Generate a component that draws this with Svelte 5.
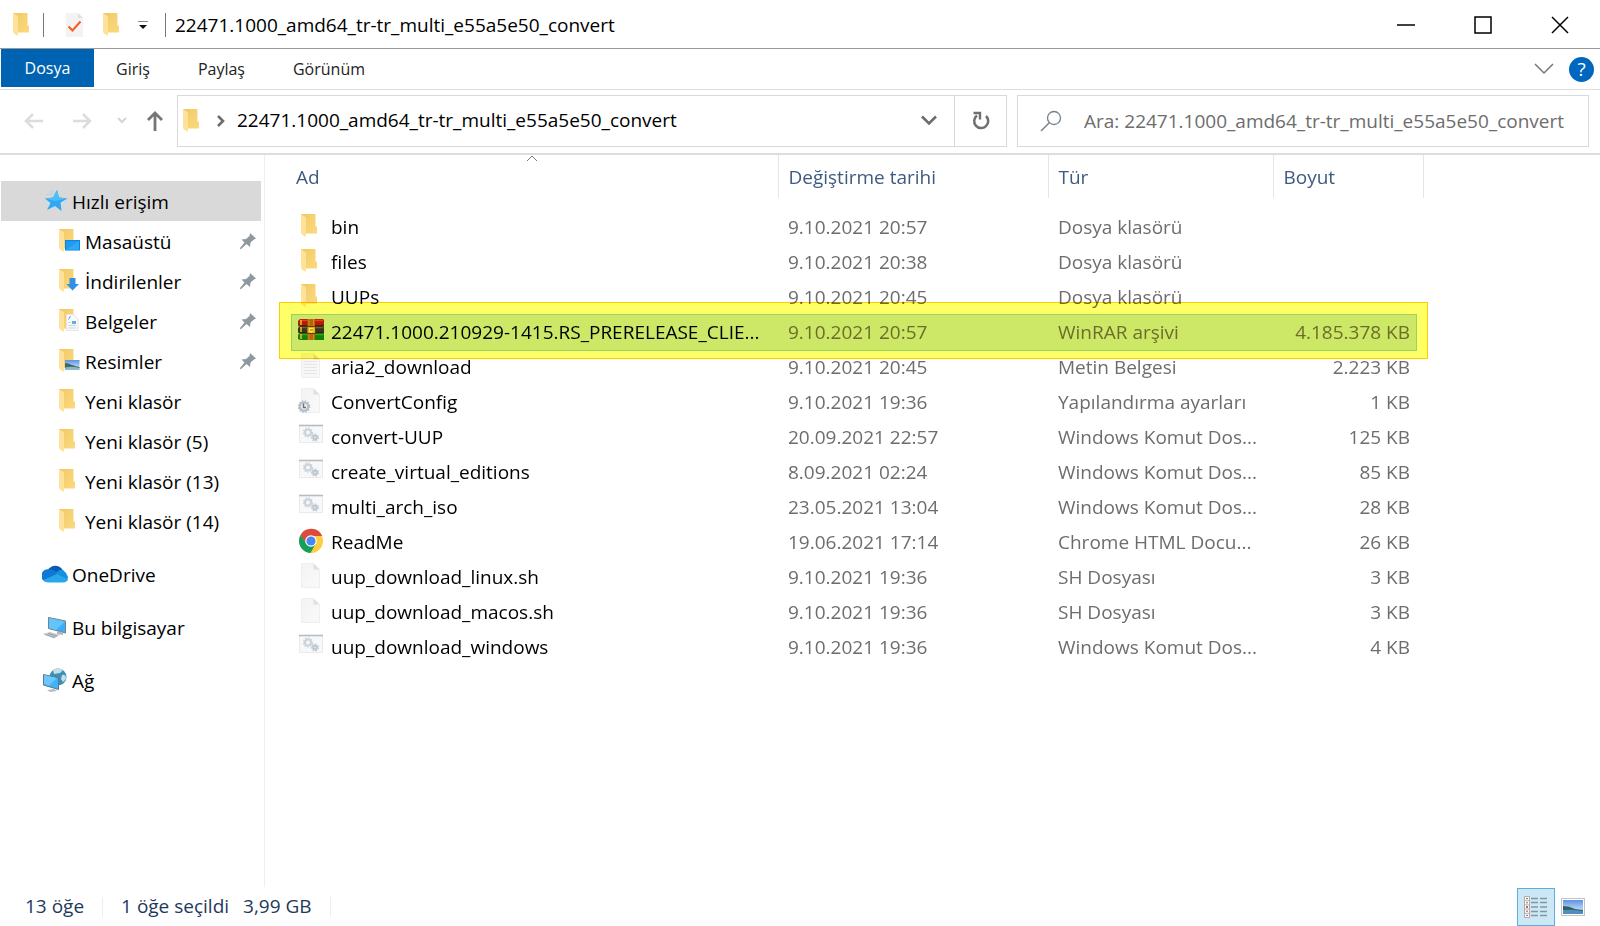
<script>
  const folderName = '22471.1000_amd64_tr-tr_multi_e55a5e50_convert';
  const tabs = ['Giriş', 'Paylaş', 'Görünüm'];

  const quick = [
    { icon: 'desktop', label: 'Masaüstü', pinned: true },
    { icon: 'downloads', label: 'İndirilenler', pinned: true },
    { icon: 'documents', label: 'Belgeler', pinned: true },
    { icon: 'pictures', label: 'Resimler', pinned: true },
    { icon: 'folder', label: 'Yeni klasör' },
    { icon: 'folder', label: 'Yeni klasör (5)' },
    { icon: 'folder', label: 'Yeni klasör (13)' },
    { icon: 'folder', label: 'Yeni klasör (14)' }
  ];
  const places = [
    { icon: 'onedrive', label: 'OneDrive' },
    { icon: 'computer', label: 'Bu bilgisayar' },
    { icon: 'network', label: 'Ağ' }
  ];

  const files = [
    { icon: 'folder', name: 'bin', date: '9.10.2021 20:57', type: 'Dosya klasörü', size: '' },
    { icon: 'folder', name: 'files', date: '9.10.2021 20:38', type: 'Dosya klasörü', size: '' },
    { icon: 'folder', name: 'UUPs', date: '9.10.2021 20:45', type: 'Dosya klasörü', size: '' },
    { icon: 'winrar', name: '22471.1000.210929-1415.RS_PRERELEASE_CLIE...', date: '9.10.2021 20:57', type: 'WinRAR arşivi', size: '4.185.378 KB', selected: true },
    { icon: 'text', name: 'aria2_download', date: '9.10.2021 20:45', type: 'Metin Belgesi', size: '2.223 KB' },
    { icon: 'config', name: 'ConvertConfig', date: '9.10.2021 19:36', type: 'Yapılandırma ayarları', size: '1 KB' },
    { icon: 'script', name: 'convert-UUP', date: '20.09.2021 22:57', type: 'Windows Komut Dos...', size: '125 KB' },
    { icon: 'script', name: 'create_virtual_editions', date: '8.09.2021 02:24', type: 'Windows Komut Dos...', size: '85 KB' },
    { icon: 'script', name: 'multi_arch_iso', date: '23.05.2021 13:04', type: 'Windows Komut Dos...', size: '28 KB' },
    { icon: 'chrome', name: 'ReadMe', date: '19.06.2021 17:14', type: 'Chrome HTML Docu...', size: '26 KB' },
    { icon: 'page', name: 'uup_download_linux.sh', date: '9.10.2021 19:36', type: 'SH Dosyası', size: '3 KB' },
    { icon: 'page', name: 'uup_download_macos.sh', date: '9.10.2021 19:36', type: 'SH Dosyası', size: '3 KB' },
    { icon: 'script', name: 'uup_download_windows', date: '9.10.2021 19:36', type: 'Windows Komut Dos...', size: '4 KB' }
  ];
</script>

{#snippet folderShape()}
  <path d="M3 1H17.500V13.500H19V20.500H7V4L3 2Z" fill="url(#folder-back)" />
  <path d="M3 1L8 4.500V24L4 21.500Q3 20.500 3 19.500Z" fill="#ffe299" />
{/snippet}

{#snippet pageShape()}
  <path d="M3.500 .5H15.500L21.500 6.500V24.500H3.500Z" fill="url(#page-fill)" stroke="#efeff0" />
  <path d="M15.500 .5V6.500H21.500Z" fill="#dfe0e2" />
{/snippet}

{#snippet gear(x, y, r, color)}
  <circle cx={x} cy={y} r={r} fill="none" stroke={color} stroke-width="2.200" />
  <circle cx={x} cy={y} r={r + 1.5} fill="none" stroke={color} stroke-width="1.400" stroke-dasharray="1.500 1.500" />
{/snippet}

{#snippet icon(name)}
  <svg class="icon" viewBox="0 0 26 26" aria-hidden="true">
    {#if name === 'folder'}
      {@render folderShape()}
    {:else if name === 'desktop'}
      {@render folderShape()}
      <rect x="9.500" y="12.500" width="14" height="9.500" fill="#1e9bf0" stroke="#0b84dc" />
      <path d="M10 21.500L23 13V21.500Z" fill="#2fa9f6" />
    {:else if name === 'downloads'}
      {@render folderShape()}
      <path d="M13.500 10H19.500V16H23L16.500 22.500L10.500 16H13.500Z" fill="#2f90e4" />
    {:else if name === 'documents'}
      {@render folderShape()}
      <path d="M10.500 6.500H17L22 10.500V22.500H10.500Z" fill="#f8fafc" stroke="#e3e6e9" />
      <path d="M14.500 8L12.500 11.500" stroke="#6f9cc4" />
      <rect x="16" y="13" width="4" height="3" fill="#6fa9d8" />
      <path d="M12 14.500H14.500M12 17.500H20M12 20H20" stroke="#cdd5dc" />
    {:else if name === 'pictures'}
      {@render folderShape()}
      <rect x="9" y="12" width="14.500" height="10" fill="url(#sky)" />
      <path d="M9 15C13 15 17 18 23.500 19V20H9Z" fill="#41685c" />
      <path d="M9 19.500Q16 18 23.500 20V22H9Z" fill="#8db7cc" />
    {:else if name === 'star'}
      <path d="M15 2L17 9.500L25.500 10.500L18.500 14.500L19.500 23L13 18L5 22L8.500 15L3 10.500L11 9.500Z" fill="#2fa8f5" />
      <path d="M15 2L17 9.500L25.500 10.500L13 13L3 10.500L11 9.500Z" fill="#4fbcfb" />
      <path d="M7 4H12M4 6.500H11" stroke="#bccfdc" />
    {:else if name === 'onedrive'}
      <path d="M6 9A8.500 8.500 0 0 1 20.500 8.500L12 16Z" fill="#0a5bb5" />
      <path d="M1.500 19.500A6.500 6.500 0 0 1 7 8.300Q10 8 13 10L17 13L4 21Q2.500 20.500 1.500 19.500Z" fill="#0f78d4" />
      <path d="M13.500 13Q16.500 8 21 9Q24 11 26 16L25 20Z" fill="#1490df" />
      <path d="M1.500 19L15 13L26 18.500Q24.500 21.500 21.500 21.500H6Q3 21.500 1.500 19Z" fill="#28a8ea" />
    {:else if name === 'computer'}
      <path d="M6.500 3.500L23.500 7V19L6.500 14.500Z" fill="#3cadf7" stroke="#73818b" />
      <path d="M7 4L23 7.500L14 16L7 14Z" fill="#63c3fd" />
      <path d="M15 17V20L21 21V18.500" fill="#aeb4b9" />
      <path d="M1 20L8 18L18 21L12 24.500Z" fill="#c4c8cc" />
      <path d="M3 20.500L13 23.500M6 19.500L15 22" stroke="#8d959c" stroke-width=".8" />
    {:else if name === 'network'}
      <circle cx="16" cy="10" r="8.500" fill="#3c8fb8" />
      <path d="M11 3Q16 0 21 3L18 6L12 7ZM20 8Q24 7 24 12L21 15L19 12Z" fill="#c3dfe8" />
      <path d="M1.500 7.500L16.500 11V22.500L1.500 18Z" fill="#42b1f8" stroke="#5d7888" />
      <path d="M2 8L15 11L7 18.500L2 17Z" fill="#6bc9ff" />
      <path d="M5 23L12 22L15 24L8 25Z" fill="#b8bdc2" />
    {:else if name === 'winrar'}
      <path d="M2 1H25L26 2V8H2L0 7V3Z" fill="#b51a1c" />
      <path d="M2 2.500H25" stroke="#e0453c" stroke-width="1.500" />
      <path d="M2 8H25L26 9V15H2L0 14V10Z" fill="#39343f" />
      <path d="M2 9.500H25" stroke="#6c6878" stroke-width="1.500" />
      <path d="M2 15H25L26 16V22H2L0 21V17Z" fill="#128016" />
      <path d="M2 16.500H25" stroke="#32a832" stroke-width="1.500" />
      <path d="M3 2V7M3 9V14M3 16V21" stroke="#efc04b" stroke-width="1.500" />
      <path d="M0 7.800H26M0 14.800H26" stroke="#26141a" stroke-width=".8" />
      <rect x="9.500" y="1" width="7.500" height="21" fill="#b5641c" />
      <path d="M11 1V22M15.500 1V22" stroke="#d08c3a" stroke-width="1" />
      <rect x="9" y="8.500" width="8.500" height="7" fill="#d9b062" stroke="#6b3811" />
      <path d="M11.500 10.500H15V13.500H11.500ZM13 10V15" fill="#8a5526" stroke="#fff1b9" stroke-width="1" />
    {:else if name === 'text'}
      {@render pageShape()}
      <path d="M6 8.500H19M6 11.500H19M6 14.500H19M6 17.500H19M6 20.500H19" stroke="#e4e6e8" />
    {:else if name === 'config'}
      {@render pageShape()}
      <circle cx="6" cy="18.500" r="3.800" fill="#eef1f3" />
      {@render gear(6, 18.5, 4.2, '#b3bdc6')}
      <path d="M5.500 15.500V19.500H8" fill="none" stroke="#667482" stroke-width="1.500" />
    {:else if name === 'page'}
      {@render pageShape()}
    {:else if name === 'script'}
      <rect x="1.500" y="2.500" width="23" height="17" fill="#f7f8f9" stroke="#e9eaeb" />
      <path d="M1 2.500H25" stroke="#b9bbbd" stroke-width="1.600" />
      {@render gear(10, 9.5, 3, '#ccd4db')}
      {@render gear(17, 14.5, 1.8, '#bfc9d1')}
    {:else if name === 'chrome'}
      <circle cx="13" cy="13" r="12" fill="#ffcd40" />
      <path d="M2.600 7A12 12 0 0 1 24.200 8H13L8 16Z" fill="#dd4b3e" />
      <path d="M2.600 7A12 12 0 0 0 12.500 25L17.500 16H8.500Z" fill="#159f5c" />
      <circle cx="13" cy="13" r="5.800" fill="#fff" />
      <circle cx="13" cy="13" r="4.600" fill="#4587f3" />
    {/if}
  </svg>
{/snippet}

<svg class="defs" aria-hidden="true">
  <defs>
    <linearGradient id="folder-back" x1="0" y1="0" x2="1" y2="1"><stop stop-color="#f0c862" /><stop offset=".5" stop-color="#f6d273" /><stop offset="1" stop-color="#fbd97f" /></linearGradient>
    <linearGradient id="page-fill" x1="0" y1="0" x2="1" y2="1"><stop stop-color="#f3f3f4" /><stop offset="1" stop-color="#fafafb" /></linearGradient>
    <linearGradient id="sky" x1="0" y1="0" x2="0" y2="1"><stop stop-color="#5b94e6" /><stop offset="1" stop-color="#e6f4fb" /></linearGradient>
  </defs>
</svg>

<div class="window">
  <header class="titlebar">
    {@render icon('folder')}
    <span class="bar"></span>
    <button class="plain check" aria-label="Özellikler">
      <svg class="icon" viewBox="0 0 26 26">
        <path d="M4 1H16L21 6V25H4Z" fill="#f3f3f4" /><path d="M16 1V6H21Z" fill="#dedfe1" />
        <path d="M6.500 14.500L10.500 18.500L18.500 9.500" fill="none" stroke="#fa5a1e" stroke-width="2" />
      </svg>
    </button>
    <button class="plain" aria-label="Yeni klasör">{@render icon('folder')}</button>
    <button class="plain more" aria-label="Hızlı erişim araç çubuğunu özelleştir">
      <svg width="10" height="8" viewBox="0 0 10 8"><path d="M0 .5H10" stroke="#888" /><path d="M1 4H9L5 8Z" fill="#111" /></svg>
    </button>
    <span class="bar"></span>
    <h1>{folderName}</h1>
    <div class="controls">
      <button class="plain" aria-label="Simge durumuna küçült"><svg width="18" height="18" viewBox="0 0 18 18"><path d="M0 9H18" stroke="#000" stroke-width="1.500" /></svg></button>
      <button class="plain" aria-label="Ekranı kapla"><svg width="18" height="18" viewBox="0 0 18 18"><rect x="1" y="1" width="16" height="16" fill="none" stroke="#000" stroke-width="1.500" /></svg></button>
      <button class="plain" aria-label="Kapat"><svg width="18" height="18" viewBox="0 0 18 18"><path d="M1 1L17 17M17 1L1 17" stroke="#000" stroke-width="1.500" /></svg></button>
    </div>
  </header>

  <nav class="ribbon" aria-label="Şerit">
    <button class="file-tab">Dosya</button>
    <div class="tabs">
      {#each tabs as tab}<button class="plain">{tab}</button>{/each}
    </div>
    <button class="plain expand" aria-label="Şeridi genişlet"><svg width="20" height="12" viewBox="0 0 20 12"><path d="M1 1L10 10L19 1" fill="none" stroke="#777" stroke-width="1.500" /></svg></button>
    <button class="help" aria-label="Yardım">?</button>
  </nav>

  <div class="toolbar">
    <div class="history">
      <button class="plain" aria-label="Geri" disabled><svg width="20" height="18" viewBox="0 0 20 18"><path d="M19 9H2M9 2L2 9L9 16" fill="none" stroke="#dcdcdc" stroke-width="2.500" /></svg></button>
      <button class="plain" aria-label="İleri" disabled><svg width="20" height="18" viewBox="0 0 20 18"><path d="M1 9H18M11 2L18 9L11 16" fill="none" stroke="#dcdcdc" stroke-width="2.500" /></svg></button>
      <button class="plain small" aria-label="Son konumlar" disabled><svg width="10" height="7" viewBox="0 0 10 7"><path d="M1 1L5 5L9 1" fill="none" stroke="#d4d4d4" stroke-width="2" /></svg></button>
      <button class="plain up" aria-label="Yukarı"><svg width="18" height="20" viewBox="0 0 18 20"><path d="M9 20V2M2 9L9 2L16 9" fill="none" stroke="#767676" stroke-width="2.800" /></svg></button>
    </div>
    <div class="address">
      {@render icon('folder')}
      <svg class="crumb" width="8" height="12" viewBox="0 0 8 12"><path d="M1 1L6 6L1 11" fill="none" stroke="#6d6d6d" stroke-width="2.600" /></svg>
      <button class="plain path">{folderName}</button>
      <button class="plain drop" aria-label="Önceki konumlar"><svg width="16" height="11" viewBox="0 0 16 11"><path d="M1 1.500L8 8.500L15 1.500" fill="none" stroke="#6d6d6d" stroke-width="2.600" /></svg></button>
      <button class="plain refresh" aria-label="Yenile"><svg width="18" height="20" viewBox="0 0 18 20"><path d="M14 5A7 7 0 1 1 5 4.500" fill="none" stroke="#707070" stroke-width="2.500" /><path d="M1.500 2H8V8.500" fill="none" stroke="#707070" stroke-width="2.400" /></svg></button>
    </div>
    <label class="search">
      <svg width="22" height="22" viewBox="0 0 22 22" aria-hidden="true"><circle cx="14" cy="8" r="6.500" fill="none" stroke="#75808a" stroke-width="1.300" /><path d="M9.500 12.500L1 21" stroke="#75808a" stroke-width="1.500" /></svg>
      <input type="search" placeholder={'Ara: ' + folderName} aria-label="Ara" />
    </label>
  </div>

  <div class="body">
    <aside>
      <button class="item root current">{@render icon('star')}<span>Hızlı erişim</span></button>
      {#each quick as q}
        <button class="item">
          {@render icon(q.icon)}<span>{q.label}</span>
          {#if q.pinned}
            <svg class="pin" width="18" height="18" viewBox="0 0 18 18"><path d="M11 1L17 6.500L15 7.500L11.500 10.500L11 15L7.500 12L2 17L1 17L1 16L5.500 10.500L2.500 7.500L7 7L10.500 4Z" fill="#8e989f" /></svg>
          {/if}
        </button>
      {/each}
      {#each places as p}
        <button class="item root place">{@render icon(p.icon)}<span>{p.label}</span></button>
      {/each}
    </aside>

    <main>
      <table>
        <colgroup><col class="c-name" /><col class="c-date" /><col class="c-type" /><col class="c-size" /></colgroup>
        <thead>
          <tr>
            <th scope="col">Ad
              <svg class="sort" width="12" height="7" viewBox="0 0 12 7" aria-hidden="true"><path d="M1 6L6 1L11 6" fill="none" stroke="#777" /></svg>
            </th>
            <th scope="col">Değiştirme tarihi</th>
            <th scope="col">Tür</th>
            <th scope="col">Boyut</th>
          </tr>
        </thead>
        <tbody>
          {#each files as f}
            <tr class:selected={f.selected}>
              <td><div class="name">{@render icon(f.icon)}<span>{f.name}</span></div></td>
              <td>{f.date}</td>
              <td>{f.type}</td>
              <td class="size">{f.size}{#if f.selected}<span class="marker"></span>{/if}</td>
            </tr>
          {/each}
        </tbody>
      </table>
    </main>
  </div>

  <footer>
    <span class="count">13 öğe</span>
    <span class="chosen"><span>1 öğe seçildi</span><span>3,99 GB</span></span>
    <div class="views">
      <button class="plain view active" aria-label="Ayrıntılar">
        <svg width="24" height="22" viewBox="0 0 24 22">
          <path d="M.5 .5H5.500V21.500H.5ZM.5 4.700H5.500M.5 8.900H5.500M.5 13.100H5.500M.5 17.300H5.500" fill="#fff" stroke="#b5aaa4" />
          <path d="M2 2.600H4M2 6.800H4M2 15.200H4M2 19.400H4" stroke="#64717a" /><path d="M2 11H4" stroke="#c22" stroke-width="1.500" />
          <path d="M7 2.500H14M16 2.500H23M7 6.500H14M16 6.500H23M7 11H14M16 11H23M7 15.500H14M16 15.500H23M7 19.500H14M16 19.500H23" stroke="#87959d" stroke-width="1.300" />
        </svg>
      </button>
      <button class="plain view" aria-label="Büyük simgeler">
        <svg width="24" height="18" viewBox="0 0 24 18"><rect x=".5" y=".5" width="23" height="17" fill="#fff" stroke="#c2c2c2" /><rect x="2" y="2" width="20" height="14" fill="url(#sky)" /><path d="M2 8Q8 8 14 11L22 12V13H2Z" fill="#315f55" /><path d="M2 12Q10 11 22 13V16H2Z" fill="#4d8fc0" /></svg>
      </button>
    </div>
  </footer>
</div>

<style>
  :global(body) { background: #fff; }
  .window {
    display: flex; flex-direction: column; min-height: 100vh; box-sizing: border-box;
    font-family: "Open Sans", "Noto Sans", sans-serif; font-size: 19px; line-height: 27px; color: #000; background: #fff;
  }
  .window *, .window *::before { box-sizing: border-box; }
  .defs { position: absolute; width: 0; height: 0; }
  button { font: inherit; color: inherit; border: 0; margin: 0; padding: 0; cursor: default; }
  .plain { background: none; display: flex; align-items: center; justify-content: center; }
  svg { display: block; flex: none; }
  .icon { width: 26px; height: 26px; }

  .titlebar { display: flex; align-items: center; height: 49px; padding: 2px 0 0 10px; border-bottom: 1px solid #999; }
  .bar { width: 1px; height: 24px; margin-left: 7px; background: #777; }
  .check { margin-left: 18px; }
  .check + .plain { margin-left: 12px; }
  .more { width: 26px; margin-left: 4px; }
  .more + .bar { margin-left: 9px; }
  h1 { margin: 0 0 0 9px; font-size: 19px; font-weight: 400; flex: 1; white-space: nowrap; }
  .controls { display: flex; padding-right: 2px; }
  .controls .plain { width: 77px; height: 46px; }

  .ribbon { display: flex; align-items: center; height: 41px; padding: 0 6px 0 1px; border-bottom: 1px solid #ddd; font-size: 16px; color: #222; }
  .file-tab { align-self: flex-start; width: 93px; height: 38px; background: #0063b1; color: #fff; }
  .tabs { flex: 1; display: flex; gap: 48px; padding-left: 22px; }
  .expand { width: 30px; height: 30px; margin-right: 10px; }
  .help { width: 25px; height: 25px; border-radius: 50%; background: #0067c0; color: #fff; font-size: 19px; line-height: 25px; }

  .toolbar { display: flex; align-items: center; height: 65px; padding: 0 11px 2px 24px; gap: 10px; border-bottom: 2px solid #ddd; }
  .history { display: flex; align-items: center; width: 143px; gap: 28px; }
  .history .small { margin: 0 -3px; }
  .history .up { margin-left: -6px; }
  .address { flex: 830 1 830px; min-width: 0; height: 52px; display: flex; align-items: center; border: 1px solid #d9d9d9; padding-left: 2px; }
  .crumb { margin: 0 12px 0 11px; }
  .path { flex: 1; min-width: 0; justify-content: flex-start; white-space: nowrap; }
  .drop { width: 50px; height: 50px; }
  .refresh { width: 52px; height: 50px; border-left: 1px solid #d9d9d9; }
  .search { flex: 572 1 572px; min-width: 0; height: 52px; display: flex; align-items: center; border: 1px solid #d9d9d9; padding-left: 22px; gap: 22px; }
  .search input { flex: 1; min-width: 0; height: 40px; border: 0; outline: 0; padding: 0; background: none; font: inherit; color: #111; }
  .search input::placeholder { color: #6d6d6d; opacity: 1; }

  .body { flex: 1; display: flex; }
  aside { width: 265px; flex: none; padding: 26px 3px 0 1px; border-right: 1px solid #eee; }
  .item { display: flex; align-items: center; width: 100%; height: 40px; padding: 0 4px 0 55px; gap: 3px; background: none; text-align: left; white-space: nowrap; }
  .item span { flex: 1; padding-top: 2px; }
  .root { padding-left: 41px; gap: 4px; }
  .current { background: #d9d9d9; }
  .place { margin-top: 13px; }

  main { flex: 1; min-width: 0; padding-left: 27px; position: relative; z-index: 0; overflow: hidden; }
  table { border-collapse: collapse; table-layout: fixed; width: 1131px; }
  .c-name { width: 486px; }
  .c-date { width: 270px; }
  .c-type { width: 225px; }
  .c-size { width: 150px; }
  th { position: relative; height: 43px; padding: 2px 0 0 10px; border-right: 1px solid #e5e5e5; font-weight: 400; text-align: left; color: #3f5a80; }
  th:first-child { padding-left: 4px; }
  .sort { position: absolute; top: 0; left: 50%; margin-left: -9px; }
  tbody::before { content: ""; display: block; height: 12px; }
  td { height: 35px; padding: 0 0 0 10px; color: #6d6d6d; white-space: nowrap; }
  td:first-child { padding-left: 6px; color: #000; }
  .name { display: flex; align-items: center; gap: 7px; }
  .name .icon { margin-bottom: 3px; }
  .size { text-align: right; padding-right: 13px; }
  .selected { position: relative; }
  .selected td:first-child::before { content: ""; position: absolute; z-index: -1; inset: -1px 6px -1px -1px; background: #cce8ff; border: 1px solid #99d1ff; }
  .marker { position: absolute; inset: -13px -5px -9px -13px; background: #ff6; border: 1px solid #fc0; mix-blend-mode: multiply; }

  footer { display: flex; align-items: center; height: 39px; padding: 0 9px 0 25px; color: #1e395b; }
  .count, .chosen { height: 20px; display: flex; align-items: center; border-right: 1px solid #eee; padding-right: 18px; }
  .chosen { gap: 14px; padding-left: 18px; }
  .views { margin-left: auto; display: flex; }
  .view { width: 36px; height: 38px; }
  .active { width: 38px; background: #cce8f6; border: 1px solid #5aaee0; }
</style>
